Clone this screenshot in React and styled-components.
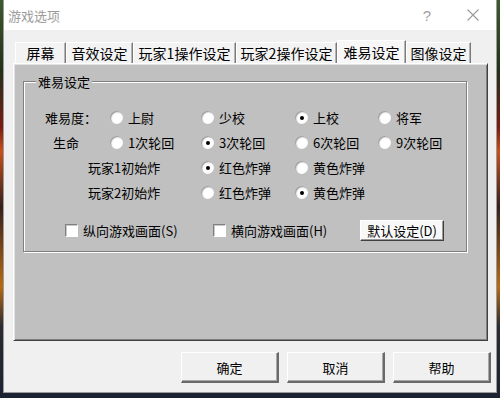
import styled, { createGlobalStyle } from 'styled-components';

const Global = createGlobalStyle`
  html, body {
    margin: 0;
    padding: 0;
  }
  body {
    font-family: "Noto Sans CJK SC", "Liberation Sans", sans-serif;
    font-size: 13px;
    color: #000;
  }
`;

const Desktop = styled.div`
  width: 500px;
  height: 398px;
  box-sizing: border-box;
  padding: 0 3px 5px 3px;
  background:
    linear-gradient(180deg, #3d5a2c 0%, #22301a 18%, #7a1c10 32%, #c8501a 38%, #35201c 52%, #b86a12 72%, #2a2c30 82%, #1b2233 100%);
  overflow: hidden;
`;

const Window = styled.div`
  height: 100%;
  box-sizing: border-box;
  background: #f0f0f0;
  border: 1px solid #9a9a9a;
  border-top: none;
  display: flex;
  flex-direction: column;
`;

const TitleBar = styled.div`
  height: 30px;
  background: #ffffff;
  display: flex;
  align-items: center;
  padding-left: 4px;
`;

const Title = styled.span`
  flex: 1;
  color: #9b9b9b;
  font-size: 13px;
`;

const TitleButton = styled.span`
  width: 46px;
  height: 30px;
  display: flex;
  align-items: center;
  justify-content: center;
  color: #a0a0a0;
  font-family: "Liberation Sans", sans-serif;
  font-size: 15px;
`;

const Content = styled.div`
  flex: 1;
  display: flex;
  flex-direction: column;
  padding: 10px 8px 0 9px;
`;

const TabRow = styled.div`
  display: flex;
  align-items: flex-end;
  height: 23px;
  padding-left: 2px;
`;

const Tab = styled.div`
  height: ${(p) => (p.$active ? 23 : 21)}px;
  box-sizing: border-box;
  width: ${(p) => p.$w}px;
  display: flex;
  align-items: center;
  justify-content: center;
  font-size: 14px;
  background: ${(p) => (p.$active ? '#f7f7f7' : '#f3f3f3')};
  border-top: 1px solid #ffffff;
  border-left: 1px solid #ffffff;
  border-right: 1px solid #7a7a7a;
  box-shadow: inset -1px 0 #b5b5b5;
  padding-bottom: 1px;
`;

const Panel = styled.div`
  height: 278px;
  box-sizing: border-box;
  background: #c0c0c0;
  border-left: 1px solid #ffffff;
  border-top: 1px solid #ffffff;
  border-right: 1px solid #404040;
  border-bottom: 1px solid #404040;
  box-shadow: inset 1px 1px #e3e3e3, inset -1px -1px #808080;
  padding: 8px 20px 0 9px;
`;

const Group = styled.fieldset`
  margin: 0;
  padding: 0;
  height: 180px;
  box-sizing: border-box;
  border: 1px solid #808080;
  box-shadow: 1px 1px #ffffff, inset 1px 1px #ffffff;
  display: flex;
  flex-direction: column;
`;

const Legend = styled.legend`
  margin-left: 12px;
  padding: 0 2px;
  font-size: 13px;
  background: #c0c0c0;
`;

const Rows = styled.div`
  padding-top: 14px;
  display: flex;
  flex-direction: column;
`;

const Row = styled.div`
  display: grid;
  grid-template-columns: 86px 91px 94px 83px 1fr;
  align-items: center;
  height: 25px;
`;

const RowLabel = styled.span`
  grid-column: ${(p) => (p.$wide ? '1 / 3' : '1 / 2')};
  padding-left: ${(p) => p.$indent}px;
  font-size: 13px;
  white-space: nowrap;
`;

const Option = styled.label`
  grid-column: ${(p) => p.$col};
  display: flex;
  align-items: center;
  gap: 5px;
  font-size: 13px;
  white-space: nowrap;
`;

const Radio = styled.span`
  width: 13px;
  height: 13px;
  border-radius: 50%;
  background: radial-gradient(circle at 60% 60%, #ffffff 45%, #e2e2e2 70%, #bdbdbd 100%);
  box-shadow: inset 1px 1px 1px #9a9a9a;
  display: flex;
  align-items: center;
  justify-content: center;
  &::after {
    content: '';
    width: 4px;
    height: 4px;
    border-radius: 50%;
    background: ${(p) => (p.$checked ? '#000' : 'transparent')};
  }
`;

const CheckRow = styled.div`
  margin-top: 15px;
  display: grid;
  grid-template-columns: 148px 147px auto;
  align-items: center;
  padding-left: 41px;
`;

const Check = styled.label`
  display: flex;
  align-items: center;
  gap: 5px;
  font-size: 13px;
  white-space: nowrap;
`;

const Box = styled.span`
  width: 13px;
  height: 13px;
  box-sizing: border-box;
  background: #ffffff;
  border-top: 1px solid #808080;
  border-left: 1px solid #808080;
  border-right: 1px solid #ffffff;
  border-bottom: 1px solid #ffffff;
  box-shadow: inset 1px 1px #c8c8c8;
`;

const SmallButton = styled.button`
  width: 84px;
  height: 21px;
  padding: 0;
  font-family: inherit;
  font-size: 13px;
  color: #000;
  background: #f8f8f8;
  border-top: 1px solid #ffffff;
  border-left: 1px solid #ffffff;
  border-right: 1px solid #404040;
  border-bottom: 1px solid #404040;
  box-shadow: inset -1px -1px #9a9a9a;
`;

const Footer = styled.div`
  display: flex;
  justify-content: flex-end;
  gap: 8px;
  padding: 11px 0 0 0;
  margin-right: -3px;
`;

const Button = styled.button`
  width: 98px;
  height: 31px;
  padding: 0;
  font-family: inherit;
  font-size: 13px;
  color: #000;
  background: #f0f0f0;
  border-top: 1px solid #ffffff;
  border-left: 1px solid #ffffff;
  border-right: 2px solid #6a6a6a;
  border-bottom: 2px solid #6a6a6a;
  box-shadow: inset -1px -1px #a8a8a8;
`;

const tabs = [
  { label: '屏幕', w: 51 },
  { label: '音效设定', w: 67 },
  { label: '玩家1操作设定', w: 103 },
  { label: '玩家2操作设定', w: 101 },
  { label: '难易设定', w: 69, active: true },
  { label: '图像设定', w: 65 },
];

const rows = [
  { label: '难易度：', indent: 21, options: [['上尉', false], ['少校', false], ['上校', true], ['将军', false]] },
  { label: '生命', indent: 29, options: [['1次轮回', false], ['3次轮回', true], ['6次轮回', false], ['9次轮回', false]] },
  { label: '玩家1初始炸', indent: 64, wide: true, options: [null, ['红色炸弹', true], ['黄色炸弹', false]] },
  { label: '玩家2初始炸', indent: 64, wide: true, options: [null, ['红色炸弹', false], ['黄色炸弹', true]] },
];

const App = () => {
  return (
    <>
      <Global />
      <Desktop>
        <Window>
          <TitleBar>
            <Title>游戏选项</Title>
            <TitleButton>?</TitleButton>
            <TitleButton>
              <svg width="12" height="12" viewBox="0 0 12 12">
                <path d="M0.5 0.5 L11.5 11.5 M11.5 0.5 L0.5 11.5" stroke="#9a9a9a" strokeWidth="1.1" fill="none" />
              </svg>
            </TitleButton>
          </TitleBar>
          <Content>
            <TabRow>
              {tabs.map((t) => (
                <Tab key={t.label} $w={t.w} $active={t.active}>
                  {t.label}
                </Tab>
              ))}
            </TabRow>
            <Panel>
              <Group>
                <Legend>难易设定</Legend>
                <Rows>
                  {rows.map((r) => (
                    <Row key={r.label}>
                      <RowLabel $indent={r.indent} $wide={r.wide}>
                        {r.label}
                      </RowLabel>
                      {r.options.map((o, i) =>
                        o ? (
                          <Option key={o[0]} $col={i + 2}>
                            <Radio $checked={o[1]} />
                            {o[0]}
                          </Option>
                        ) : null
                      )}
                    </Row>
                  ))}
                </Rows>
                <CheckRow>
                  <Check>
                    <Box />
                    纵向游戏画面(S)
                  </Check>
                  <Check>
                    <Box />
                    横向游戏画面(H)
                  </Check>
                  <SmallButton>默认设定(D)</SmallButton>
                </CheckRow>
              </Group>
            </Panel>
            <Footer>
              <Button>确定</Button>
              <Button>取消</Button>
              <Button>帮助</Button>
            </Footer>
          </Content>
        </Window>
      </Desktop>
    </>
  );
};

export default App;
